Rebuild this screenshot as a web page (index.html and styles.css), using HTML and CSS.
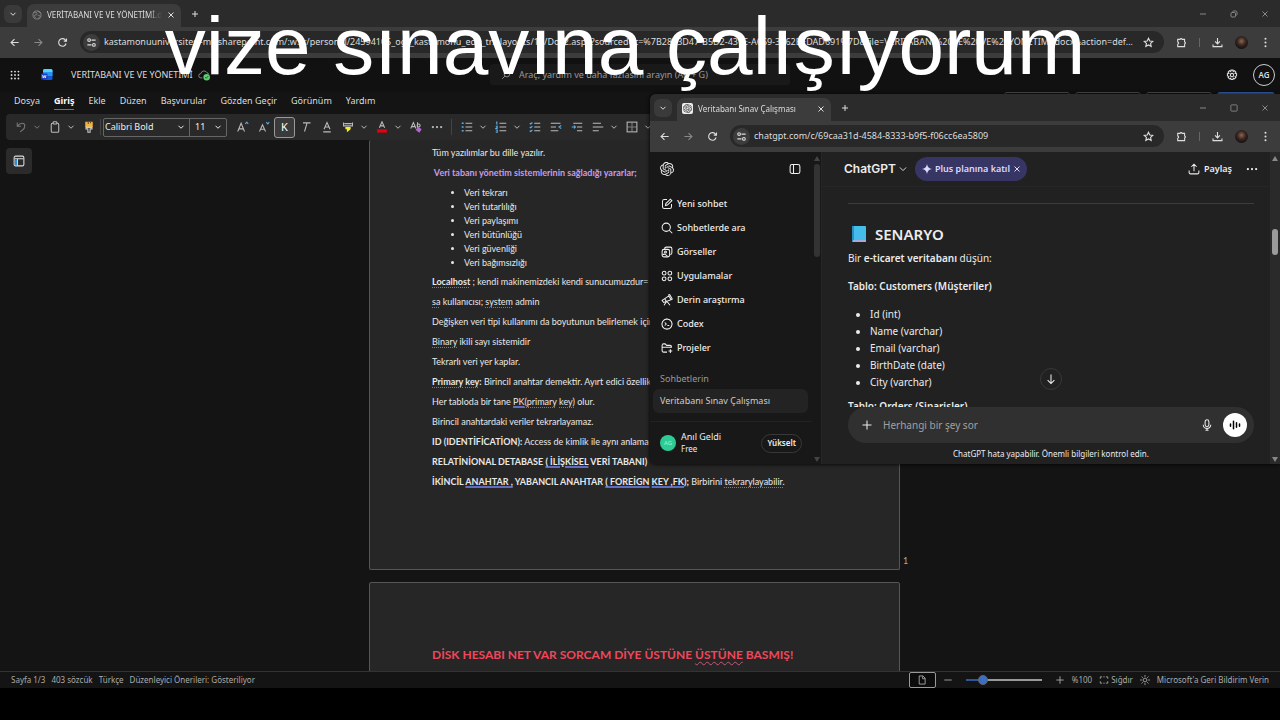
FILE: index.html
```html
<!DOCTYPE html>
<html lang="tr">
<head>
  <meta charset="utf-8">
  <title>VERİTABANI VE VE YÖNETİMİ.docx</title>
  <link rel="stylesheet" href="styles.css">
</head>
<body>
  <!-- Shared icons -->
  <svg class="defs" aria-hidden="true">
    <symbol id="chevron" viewBox="0 0 16 16"><path d="M3 5.5l5 5 5-5"/></symbol>
    <symbol id="close" viewBox="0 0 16 16"><path d="M3 3l10 10M13 3L3 13"/></symbol>
    <symbol id="plus" viewBox="0 0 16 16"><path d="M8 2v12M2 8h12"/></symbol>
    <symbol id="minus" viewBox="0 0 16 16"><path d="M2 8h12"/></symbol>
    <symbol id="back" viewBox="0 0 16 16"><path d="M14 8H3M8 3L3 8l5 5"/></symbol>
    <symbol id="forward" viewBox="0 0 16 16"><path d="M2 8h11M8 3l5 5-5 5"/></symbol>
    <symbol id="reload" viewBox="0 0 16 16"><path d="M13.2 9.5A5.5 5.5 0 1 1 12 4.2l1.6 1.6M13.8 2v4h-4"/></symbol>
    <symbol id="tune" viewBox="0 0 16 16"><circle cx="4.500" cy="4.500" r="2"/><path d="M8 4.500h6M2 11.500h6"/><circle cx="11.500" cy="11.500" r="2"/></symbol>
    <symbol id="star" viewBox="0 0 16 16"><path d="M8 1.800l1.900 4 4.300.5-3.200 3 .9 4.300L8 11.500l-3.900 2.100.9-4.300-3.200-3 4.300-.5z"/></symbol>
    <symbol id="puzzle" viewBox="0 0 16 16"><path d="M2.500 3.500h3.300a1.600 1.600 0 0 1 3.100 0h3.600v3.700a1.600 1.600 0 0 1 0 3.100v3.700h-10v-3.500a1.700 1.700 0 0 0 0-3.300z"/></symbol>
    <symbol id="download" viewBox="0 0 16 16"><path d="M8 1.500v8.500M4.500 6.500L8 10l3.500-3.500M1.500 11v3h13v-3"/></symbol>
    <symbol id="dots-v" viewBox="0 0 16 16"><g fill="currentColor" stroke="none"><circle cx="8" cy="2.500" r="1.500"/><circle cx="8" cy="8" r="1.500"/><circle cx="8" cy="13.500" r="1.500"/></g></symbol>
    <symbol id="dots-h" viewBox="0 0 16 16"><g fill="currentColor" stroke="none"><circle cx="2.500" cy="8" r="1.500"/><circle cx="8" cy="8" r="1.500"/><circle cx="13.500" cy="8" r="1.500"/></g></symbol>
    <symbol id="square" viewBox="0 0 16 16"><rect x="3" y="3" width="10" height="10" rx="1"/></symbol>
    <symbol id="restore" viewBox="0 0 16 16"><rect x="2" y="5" width="9" height="9" rx="2"/><path d="M5 3q.5-1 2-1h4q3 0 3 3v4q0 1.500-1 2"/></symbol>
    <symbol id="knot" viewBox="0 0 24 24"><path fill="currentColor" stroke="none" d="M22.2819 9.8211a5.9847 5.9847 0 0 0-.5157-4.9108 6.0462 6.0462 0 0 0-6.5098-2.9A6.0651 6.0651 0 0 0 4.9807 4.1818a5.9847 5.9847 0 0 0-3.9977 2.9 6.0462 6.0462 0 0 0 .7427 7.0966 5.98 5.98 0 0 0 .511 4.9107 6.051 6.051 0 0 0 6.5146 2.9001A5.9847 5.9847 0 0 0 13.2599 24a6.0557 6.0557 0 0 0 5.7718-4.2058 5.9894 5.9894 0 0 0 3.9977-2.9001 6.0557 6.0557 0 0 0-.7475-7.0729zm-9.022 12.6081a4.4755 4.4755 0 0 1-2.8764-1.0408l.1419-.0804 4.7783-2.7582a.7948.7948 0 0 0 .3927-.6813v-6.7369l2.02 1.1686a.071.071 0 0 1 .038.052v5.5826a4.504 4.504 0 0 1-4.4945 4.4944zm-9.6607-4.1254a4.4708 4.4708 0 0 1-.5346-3.0137l.142.0852 4.783 2.7582a.7712.7712 0 0 0 .7806 0l5.8428-3.3685v2.3324a.0804.0804 0 0 1-.0332.0615L9.74 19.9502a4.4992 4.4992 0 0 1-6.1408-1.6464zM2.3408 7.8956a4.485 4.485 0 0 1 2.3655-1.9728V11.6a.7664.7664 0 0 0 .3879.6765l5.8144 3.3543-2.0201 1.1685a.0757.0757 0 0 1-.071 0l-4.8303-2.7865A4.504 4.504 0 0 1 2.3408 7.872zm16.5963 3.8558L13.1038 8.364 15.1192 7.2a.0757.0757 0 0 1 .071 0l4.8303 2.7913a4.4944 4.4944 0 0 1-.6765 8.1042v-5.6772a.79.79 0 0 0-.407-.667zm2.0107-3.0231l-.142-.0852-4.7735-2.7818a.7759.7759 0 0 0-.7854 0L9.409 9.2297V6.8974a.0662.0662 0 0 1 .0284-.0615l4.8303-2.7866a4.4992 4.4992 0 0 1 6.6802 4.66zM8.3065 12.863l-2.02-1.1638a.0804.0804 0 0 1-.038-.0567V6.0742a4.4992 4.4992 0 0 1 7.3757-3.4537l-.142.0805L8.704 5.459a.7948.7948 0 0 0-.3927.6813zm1.0976-2.3654l2.602-1.4998 2.6069 1.4998v2.9994l-2.5974 1.4997-2.6067-1.4997Z"/></symbol>
  </svg>

  <div class="word">
    <div class="tabstrip">
      <button class="tab-search" aria-label="Sekme ara"><svg class="icon xs"><use href="#chevron"/></svg></button>
      <div class="tab">
        <svg class="icon globe" viewBox="0 0 16 16"><circle cx="8" cy="8" r="6.500"/><path d="M3 4c2 1 4-1 5 1s-1 3-3 3-1 3 1 5M10 2c0 2 2 2 4 3M9 9c2-1 4 0 4 1s-2 2-3 4"/></svg>
        <span class="tab-title">VERİTABANI VE VE YÖNETİMİ.docx</span>
        <button aria-label="Sekmeyi kapat"><svg class="icon xs"><use href="#close"/></svg></button>
      </div>
      <button class="new-tab" aria-label="Yeni sekme"><svg class="icon xs"><use href="#plus"/></svg></button>
      <div class="window-buttons">
        <button aria-label="Simge durumuna küçült"><svg class="icon xs"><use href="#minus"/></svg></button>
        <button aria-label="Önceki boyut"><svg class="icon xs"><use href="#restore"/></svg></button>
        <button aria-label="Kapat"><svg class="icon xs"><use href="#close"/></svg></button>
      </div>
    </div>
    <div class="navbar">
      <button aria-label="Geri"><svg class="icon"><use href="#back"/></svg></button>
      <button class="dim" aria-label="İleri"><svg class="icon"><use href="#forward"/></svg></button>
      <button aria-label="Yenile"><svg class="icon"><use href="#reload"/></svg></button>
      <div class="omnibox">
        <span class="site"><svg class="icon"><use href="#tune"/></svg></span>
        <input type="text" aria-label="Adres" value="kastamonuuniversitesi-my.sharepoint.com/:w:/r/personal/24594105_ogr_kastamonu_edu_tr/_layouts/15/Doc2.aspx?sourcedoc=%7B28E3D47-B5D2-431E-A659-3262BFDAD691%7D&amp;file=VERITABANI%20VE%20VE%20YÖNETIMI.docx&amp;action=default&amp;mobileredirect=true">
        <button aria-label="Yer işareti"><svg class="icon"><use href="#star"/></svg></button>
      </div>
      <div class="nav-right">
        <button aria-label="Uzantılar"><svg class="icon"><use href="#puzzle"/></svg></button>
        <span class="nav-line"></span>
        <button aria-label="İndirilenler"><svg class="icon"><use href="#download"/></svg></button>
        <button class="profile" aria-label="Profil"><span class="photo"></span></button>
        <button aria-label="Menü"><svg class="icon"><use href="#dots-v"/></svg></button>
      </div>
    </div>

    <header class="word-header">
      <button class="waffle" aria-label="Uygulama başlatıcı">
        <svg class="icon" viewBox="0 0 16 16"><g fill="#ddd" stroke="none"><circle cx="2.500" cy="2.500" r="1.500"/><circle cx="8" cy="2.500" r="1.500"/><circle cx="13.500" cy="2.500" r="1.500"/><circle cx="2.500" cy="8" r="1.500"/><circle cx="8" cy="8" r="1.500"/><circle cx="13.500" cy="8" r="1.500"/><circle cx="2.500" cy="13.500" r="1.500"/><circle cx="8" cy="13.500" r="1.500"/><circle cx="13.500" cy="13.500" r="1.500"/></g></svg>
      </button>
      <svg class="word-logo" viewBox="0 0 24 24"><rect x="4" y="1" width="19" height="22" rx="3" fill="#1458d4"/><path d="M4 8V4q0-3 3-3h13q3 0 3 3v4z" fill="#55d3ff"/><path d="M4 8h19v7H4z" fill="#2495f4"/><rect x="0" y="10" width="13" height="12" rx="2" fill="#1740c4"/><path d="M3 13l1.500 6 2-5 2 5L10 13" stroke="#fff" stroke-width="1.500" fill="none"/></svg>
      <h1 class="doc-name">VERİTABANI VE VE YÖNETİMİ</h1>
      <svg class="cloud" viewBox="0 0 18 16"><path d="M6 12H4a3 3 0 0 1 0-6 4.500 4.500 0 0 1 8.500-1A3 3 0 0 1 15 7" fill="none" stroke="#aaa"/><circle cx="12" cy="11" r="4.500" fill="#5bd06f"/><path d="M10 11l1.500 1.500L14.200 9.500" fill="none" stroke="#222"/></svg>
      <label class="search">
        <svg class="icon" viewBox="0 0 16 16"><circle cx="9.500" cy="6.500" r="4.500"/><path d="M6.300 9.700L2 14"/></svg>
        <input type="search" aria-label="Ara" placeholder="Araç, yardım ve daha fazlasını arayın (Alt + G)">
      </label>
      <button class="gear" aria-label="Ayarlar"><svg class="icon md" viewBox="0 0 16 16"><path d="M6.700 1.500h2.600l.4 1.900 1.600-1.100 1.900 1.900-1.100 1.600 2 .5v2.900l-2 .5 1.100 1.600-1.900 1.900-1.600-1.100-.4 2H6.700l-.4-2-1.600 1.100-1.900-1.900 1.100-1.600-2-.5V6.300l2-.5-1.100-1.600 1.900-1.900 1.600 1.100z"/><circle cx="8" cy="8" r="2.200"/></svg></button>
      <button class="account">AG</button>
    </header>

    <nav class="menu">
      <a href="#">Dosya</a>
      <a href="#" class="active">Giriş</a>
      <a href="#">Ekle</a>
      <a href="#">Düzen</a>
      <a href="#">Başvurular</a>
      <a href="#">Gözden Geçir</a>
      <a href="#">Görünüm</a>
      <a href="#">Yardım</a>
      <div class="menu-actions">
        <button aria-label="Açıklamalar"></button>
        <button aria-label="Yakala"></button>
        <button aria-label="Düzenleme"></button>
        <button class="share-blue" aria-label="Paylaş"></button>
      </div>
    </nav>

    <div class="ribbon">
      <button class="tool off" aria-label="Geri al"><svg class="icon md" viewBox="0 0 16 16"><path d="M3 2v5h5M3 7q3-4 6.500-4T13 6.500 10 12l-3 2.500"/></svg></button>
      <button class="chev off" aria-label="Geri alma seçenekleri"><svg class="icon xs"><use href="#chevron"/></svg></button>
      <button class="tool" aria-label="Yapıştır"><svg class="icon md" viewBox="0 0 16 16"><rect x="3" y="3" width="10" height="12" rx="1.500"/><rect x="5.500" y="1" width="5" height="3" rx="1" fill="#292929"/></svg></button>
      <button class="chev" aria-label="Yapıştırma seçenekleri"><svg class="icon xs"><use href="#chevron"/></svg></button>
      <button class="tool" aria-label="Biçim boyacısı"><svg class="icon md" viewBox="0 0 16 16"><path d="M3 1h10v7H3z" fill="#f2b441" stroke="none"/><path d="M7 1v3M10 1v2" stroke="#6b4b12"/><path d="M4 8.500h8v2H9.500V15h-3v-4.500H4z" stroke="#ccc"/></svg></button>
      <span class="split"></span>
      <div class="combo">
        <label class="combo-font"><select aria-label="Yazı tipi"><option>Calibri Bold</option></select><svg class="icon xs"><use href="#chevron"/></svg></label>
        <label class="combo-size"><select aria-label="Yazı tipi boyutu"><option>11</option></select><svg class="icon xs"><use href="#chevron"/></svg></label>
      </div>
      <div class="group">
        <button class="tool" aria-label="Yazı tipini büyüt"><svg class="icon md" viewBox="0 0 16 16"><path d="M1 14L5.500 3 10 14M2.500 10.500h6"/><path d="M11 4l2-2.500L15 4" stroke="#5fb0e8"/></svg></button>
        <button class="tool" aria-label="Yazı tipini küçült"><svg class="icon md" viewBox="0 0 16 16"><path d="M2 14l4-9 4 9M3.500 11h5"/><path d="M11 1.500L13 4l2-2.500" stroke="#5fb0e8"/></svg></button>
        <button class="tool pressed" aria-label="Kalın">K</button>
        <button class="tool" aria-label="İtalik"><svg class="icon md" viewBox="0 0 16 16"><path d="M4 2.500h10M9.500 2.500L6 14"/></svg></button>
        <button class="tool" aria-label="Altı çizili"><svg class="icon md" viewBox="0 0 16 16"><path d="M4 11l4-9 4 9M5.500 8h5M3 14.500h10"/></svg></button>
        <button class="tool" aria-label="Vurgu rengi"><svg class="icon md" viewBox="0 0 16 16"><path d="M2 2v4.500h12V2M3 3.500h10"/><path d="M4.500 8h7v3l-5 4V11H4.500z" fill="#f4f02c" stroke="none"/></svg></button>
        <button class="chev" aria-label="Vurgu seçenekleri"><svg class="icon xs"><use href="#chevron"/></svg></button>
        <button class="tool" aria-label="Yazı rengi"><svg class="icon md" viewBox="0 0 16 16"><path d="M4.500 9L8 1l3.500 8M5.500 6.500h5"/><path d="M1.500 11h13v4.500h-13z" fill="#e3000f" stroke="none"/></svg></button>
        <button class="chev" aria-label="Renk seçenekleri"><svg class="icon xs"><use href="#chevron"/></svg></button>
        <button class="tool" aria-label="Biçimlendirmeyi temizle"><svg class="icon md" viewBox="0 0 16 16"><path d="M1 10l3.500-8L8 10M2.200 7.500h4.500M10 1.500V9"/><circle cx="11.500" cy="6" r="2"/><path d="M11 7.500l4.500 3.500-3 4.500-5-3.500z" fill="#b565cf" stroke="none"/></svg></button>
        <button class="tool" aria-label="Diğer"><svg class="icon md"><use href="#dots-h"/></svg></button>
      </div>
      <span class="split"></span>
      <div class="group">
        <button class="tool" aria-label="Madde işaretleri"><svg class="icon md" viewBox="0 0 16 16"><path d="M6 3h9M6 8h9M6 13h9"/><path d="M1 3h2.500M1 8h2.500M1 13h2.500" stroke="#5fb0e8" stroke-width="2.200"/></svg></button>
        <button class="chev" aria-label="Madde seçenekleri"><svg class="icon xs"><use href="#chevron"/></svg></button>
        <button class="tool" aria-label="Numaralandırma"><svg class="icon md" viewBox="0 0 16 16"><path d="M6 3h9M6 8h9M6 13h9"/><path d="M1.500 1.500h1V5M1 7h2v1.500L1 10h2.500M1 12h2v3H1" stroke="#5fb0e8"/></svg></button>
        <button class="chev" aria-label="Numara seçenekleri"><svg class="icon xs"><use href="#chevron"/></svg></button>
        <button class="tool" aria-label="Denetim listesi"><svg class="icon md" viewBox="0 0 16 16"><path d="M7 3h8M7 8h8M7 13h8"/><path d="M1 3l1.200 1L4.500 2M1 8l1.200 1L4.500 7M1 13l1.200 1 2.300-2" stroke="#5fb0e8"/></svg></button>
        <button class="tool" aria-label="Girintiyi azalt"><svg class="icon md" viewBox="0 0 16 16"><path d="M1 3h13M1 8h7M1 13h10"/><path d="M15 6l-3 2 3 2" stroke="#5fb0e8"/></svg></button>
        <button class="tool" aria-label="Girintiyi artır"><svg class="icon md" viewBox="0 0 16 16"><path d="M3 3h12M8 8h7M8 13h7"/><path d="M1 8h5M4 6l2 2-2 2" stroke="#5fb0e8"/></svg></button>
        <button class="tool" aria-label="Hizalama"><svg class="icon md" viewBox="0 0 16 16"><path d="M1 3h11M1 8h14M1 13h8"/></svg></button>
        <button class="chev" aria-label="Hizalama seçenekleri"><svg class="icon xs"><use href="#chevron"/></svg></button>
        <button class="tool" aria-label="Kenarlıklar"><svg class="icon md" viewBox="0 0 16 16"><rect x="1.500" y="1.500" width="13" height="13"/><path d="M8 2v12M2 8h12" opacity=".6"/></svg></button>
        <button class="chev" aria-label="Kenarlık seçenekleri"><svg class="icon xs"><use href="#chevron"/></svg></button>
      </div>
    </div>

    <main class="workspace">
      <button class="pane-toggle" aria-label="Gezinti bölmesi"><svg class="icon md" viewBox="0 0 16 16"><rect x="1.500" y="1.500" width="13" height="13" rx="2"/><path d="M6 5v9M2 5h12"/><path d="M2.500 6h3v7.500h-3z" fill="#2b8fd9" stroke="none"/></svg></button>
      <article class="page first">
        <p>Tüm yazılımlar bu dille yazılır.</p>
        <p class="lilac">&nbsp;Veri tabanı yönetim sistemlerinin sağladığı yararlar;</p>
        <ul>
          <li>Veri tekrarı</li>
          <li>Veri tutarlılığı</li>
          <li>Veri paylaşımı</li>
          <li>Veri bütünlüğü</li>
          <li>Veri güvenliği</li>
          <li>Veri bağımsızlığı</li>
        </ul>
        <p><b><span class="spell">Localhost</span></b> ; kendi makinemizdeki kendi sunucumuzdur=</p>
        <p><span class="spell">sa</span> kullanıcısı; <span class="spell">system</span> admin</p>
        <p>Değişken veri tipi kullanımı da boyutunun belirlemek için</p>
        <p><span class="spell">Binary</span> ikili sayı sistemidir</p>
        <p>Tekrarlı veri yer kaplar.</p>
        <p><b><span class="spell">Primary</span> <span class="spell">key</span>:</b> Birincil anahtar demektir. Ayırt edici özellik</p>
        <p>Her tabloda bir tane <span class="gram">PK</span><span class="spell">(primary</span> <span class="spell">key)</span> olur.</p>
        <p>Birincil anahtardaki veriler tekrarlayamaz.</p>
        <p><b>ID (IDENTİFİCATİON):</b> Access de kimlik ile aynı anlama</p>
        <p><b>RELATİNİONAL DETABASE <span class="gram">( İLİŞKİSEL</span> VERİ TABANI)</b></p>
        <p><b>İKİNCİL <span class="gram">ANAHTAR ,</span> YABANCIL ANAHTAR <span class="gram">( FOREİGN</span> <span class="gram">KEY ,FK</span>);</b> Birbirini <span class="spell">tekrarylayabilir.</span></p>
        <span class="page-number">1</span>
      </article>
      <article class="page second">
        <h2>DİSK HESABI NET VAR SORCAM DİYE ÜSTÜNE <span class="spell">ÜSTÜNE</span> BASMIŞ!</h2>
      </article>
    </main>

    <footer class="status">
      <span>Sayfa 1/3</span>
      <span>403 sözcük</span>
      <span>Türkçe</span>
      <span>Düzenleyici Önerileri: Gösteriliyor</span>
      <div class="status-right">
        <button class="view" aria-label="Sayfa görünümü"><svg class="icon" viewBox="0 0 16 16"><path d="M3.500 1.500h6L13 5v9.500H3.500zM9 2v4h4"/></svg></button>
        <button aria-label="Uzaklaştır"><svg class="icon"><use href="#minus"/></svg></button>
        <input type="range" aria-label="Yakınlaştırma" min="0" max="100" value="18">
        <button aria-label="Yakınlaştır"><svg class="icon"><use href="#plus"/></svg></button>
        <span>%100</span>
        <button class="fit"><svg class="icon" viewBox="0 0 16 16"><path d="M2 6V3h3M11 3h3v3M14 10v3h-3M5 13H2v-3M7 3h2M7 13h2"/></svg>Sığdır</button>
        <button aria-label="Parlaklık"><svg class="icon" viewBox="0 0 16 16"><circle cx="8" cy="8" r="3"/><path d="M8 0v3M8 13v3M0 8h3M13 8h3M2.500 2.500l2 2M11.500 11.500l2 2M2.500 13.500l2-2M11.500 4.500l2-2"/></svg></button>
        <a href="#">Microsoft'a Geri Bildirim Verin</a>
      </div>
    </footer>
  </div>

  <section class="chat-window">
    <div class="tabstrip">
      <button class="tab-search" aria-label="Sekme ara"><svg class="icon xs"><use href="#chevron"/></svg></button>
      <div class="tab">
        <span class="favicon"><svg class="icon"><use href="#knot"/></svg></span>
        <span class="tab-title">Veritabanı Sınav Çalışması</span>
        <button aria-label="Sekmeyi kapat"><svg class="icon xs"><use href="#close"/></svg></button>
      </div>
      <button class="new-tab" aria-label="Yeni sekme"><svg class="icon xs"><use href="#plus"/></svg></button>
      <div class="window-buttons">
        <button aria-label="Simge durumuna küçült"><svg class="icon xs"><use href="#minus"/></svg></button>
        <button aria-label="Ekranı kapla"><svg class="icon"><use href="#square"/></svg></button>
        <button aria-label="Kapat"><svg class="icon xs"><use href="#close"/></svg></button>
      </div>
    </div>
    <div class="navbar">
      <button aria-label="Geri"><svg class="icon"><use href="#back"/></svg></button>
      <button class="dim" aria-label="İleri"><svg class="icon"><use href="#forward"/></svg></button>
      <button aria-label="Yenile"><svg class="icon"><use href="#reload"/></svg></button>
      <div class="omnibox">
        <span class="site"><svg class="icon"><use href="#tune"/></svg></span>
        <input type="text" aria-label="Adres" value="chatgpt.com/c/69caa31d-4584-8333-b9f5-f06cc6ea5809">
        <button aria-label="Yer işareti"><svg class="icon"><use href="#star"/></svg></button>
      </div>
      <div class="nav-right">
        <button aria-label="Uzantılar"><svg class="icon"><use href="#puzzle"/></svg></button>
        <span class="nav-line"></span>
        <button aria-label="İndirilenler"><svg class="icon"><use href="#download"/></svg></button>
        <button class="profile" aria-label="Profil"><span class="photo"></span></button>
        <button aria-label="Menü"><svg class="icon"><use href="#dots-v"/></svg></button>
      </div>
    </div>

    <div class="chat-body">
      <aside class="sidebar">
        <div class="sidebar-main">
          <div class="sidebar-top">
            <svg class="icon logo"><use href="#knot"/></svg>
            <button aria-label="Kenar çubuğunu kapat"><svg class="icon md" viewBox="0 0 16 16"><rect x="1.500" y="2" width="13" height="12" rx="2.500"/><path d="M6 2v12"/></svg></button>
          </div>
          <nav class="side-nav">
            <a href="#"><svg class="icon md" viewBox="0 0 16 16"><path d="M8 2H4.500Q2 2 2 4.500v7Q2 14 4.500 14h7q2.500 0 2.500-2.500V8M6 10l.5-2.500 6-6 2 2-6 6z"/></svg>Yeni sohbet</a>
            <a href="#"><svg class="icon md" viewBox="0 0 16 16"><circle cx="7" cy="7" r="5.500"/><path d="M11 11l4 4"/></svg>Sohbetlerde ara</a>
            <a href="#"><svg class="icon md" viewBox="0 0 16 16"><path d="M5 4V3q0-1.500 2-1.500h5.500q2 0 2 2V9q0 2-2 2.500"/><rect x="1.500" y="4.500" width="10" height="10" rx="2.500"/><circle cx="6" cy="8" r="1.300"/><path d="M2 12q2-2 4-.5t3 2.500"/></svg>Görseller</a>
            <a href="#"><svg class="icon md" viewBox="0 0 16 16"><circle cx="4.200" cy="4.200" r="2.500"/><circle cx="11.800" cy="4.200" r="2.500"/><circle cx="4.200" cy="11.800" r="2.500"/><circle cx="11.800" cy="11.800" r="2.500"/></svg>Uygulamalar</a>
            <a href="#"><svg class="icon md" viewBox="0 0 16 16"><path d="M1.500 8.500l9-6 3 5-10 3.800zM9.500 1.500l2-.8 3.500 6-2 1M8 10l4 5M7.500 10L4 15M5 6l2 4"/></svg>Derin araştırma</a>
            <a href="#"><svg class="icon md" viewBox="0 0 16 16"><path d="M8 1.200l3.500 1.200L14 5l.8 3-1 3.500L11.500 14 8 14.800 4.500 14 2 11.500 1.200 8 2 5l2.500-2.600z"/><path d="M5 6l2 2-2 2M8.500 10H11"/></svg>Codex</a>
            <a href="#"><svg class="icon md" viewBox="0 0 16 16"><path d="M8 13.500H3.500q-2 0-2-2v-7q0-2 2-2h2L7.500 4.500H12q2 0 2 2M1.500 7h13M12.500 9.500v5M10 12h5"/></svg>Projeler</a>
          </nav>
          <h3>Sohbetlerin</h3>
          <a href="#" class="chat-link">Veritabanı Sınav Çalışması</a>
          <div class="user">
            <span class="avatar">AG</span>
            <div class="user-name">Anıl Geldi<small>Free</small></div>
            <button class="upgrade">Yükselt</button>
          </div>
        </div>
        <div class="bar left-bar"><i class="up"></i><i class="thumb"></i><i class="down"></i></div>
      </aside>

      <div class="chat">
        <div class="chat-main">
          <header class="chat-header">
            <button class="model">ChatGPT <svg class="icon"><use href="#chevron"/></svg></button>
            <div class="plus-pill">
              <svg class="icon" viewBox="0 0 16 16"><path d="M8 0q1 7 8 8-7 1-8 8-1-7-8-8 7-1 8-8z" fill="currentColor" stroke="none"/></svg>
              <a href="#">Plus planına katıl</a>
              <button aria-label="Gizle"><svg class="icon xs"><use href="#close"/></svg></button>
            </div>
            <button class="share"><svg class="icon md" viewBox="0 0 16 16"><path d="M8 11V2M4.500 5L8 1.500 11.500 5M1.500 10v2.500q0 2 2 2h9q2 0 2-2V10"/></svg>Paylaş</button>
            <button aria-label="Diğer"><svg class="icon md"><use href="#dots-h"/></svg></button>
          </header>
          <div class="messages">
            <hr>
            <h2><svg class="book" viewBox="0 0 16 18"><rect x="1" y="1" width="14" height="16" rx="1" fill="#45bdeb"/><path d="M1 1h2v15H1z" fill="#278fc4"/><path d="M2 15h13v2H2z" fill="#a9a6d8"/></svg>SENARYO</h2>
            <p>Bir <b>e-ticaret veritabanı</b> düşün:</p>
            <p class="table-name"><b>Tablo: Customers (Müşteriler)</b></p>
            <ul>
              <li>Id (int)</li>
              <li>Name (varchar)</li>
              <li>Email (varchar)</li>
              <li>BirthDate (date)</li>
              <li>City (varchar)</li>
            </ul>
            <p class="table-name"><b>Tablo: Orders (Siparişler)</b></p>
            <button class="scroll-down" aria-label="En alta in"><svg class="icon md" viewBox="0 0 16 16"><path d="M8 2v12M3.500 9.500L8 14l4.500-4.500"/></svg></button>
          </div>
          <form class="composer">
            <button type="button" aria-label="Ekle"><svg class="icon md"><use href="#plus"/></svg></button>
            <input type="text" aria-label="Mesaj" placeholder="Herhangi bir şey sor">
            <button type="button" aria-label="Dikte"><svg class="icon md" viewBox="0 0 16 16"><rect x="5.500" y="1" width="5" height="9" rx="2.500"/><path d="M3 7.500a5 5 0 0 0 10 0M8 12.500V15M6 15h4"/></svg></button>
            <button type="button" class="voice" aria-label="Sesli mod"><svg class="icon md" viewBox="0 0 16 16"><path d="M2 6.500v3M6 3v10M10 5v6M14 6.500v3" stroke-width="2" stroke-linecap="round"/></svg></button>
          </form>
          <p class="note">ChatGPT hata yapabilir. Önemli bilgileri kontrol edin.</p>
        </div>
        <div class="bar right-bar"><i class="up"></i><i class="thumb"></i><i class="down"></i></div>
      </div>
    </div>
  </section>

  <div class="caption">vize sınavına çalışıyorum</div>
</body>
</html>
```
FILE: styles.css
```css
* {
  box-sizing: border-box;
}

body {
  margin: 0;
  height: 100vh;
  padding-bottom: 32px;
  position: relative;
  overflow: hidden;
  background: #000;
  color: #ddd;
  font: 9px/14px "Noto Sans", sans-serif;
}

button,
input,
select {
  font: inherit;
  color: inherit;
  background: none;
  border: 0;
  padding: 0;
  margin: 0;
  outline: 0;
}

button {
  display: flex;
  align-items: center;
  justify-content: center;
  flex-shrink: 0;
}

a {
  color: inherit;
  text-decoration: none;
}

h1, h2, h3, p, ul {
  margin: 0;
  padding: 0;
}

.defs {
  display: none;
}

.icon {
  width: 10px;
  height: 10px;
  fill: none;
  stroke: currentColor;
  stroke-width: 1.4;
  flex-shrink: 0;
}

.icon.xs {
  width: 8px;
  height: 8px;
  stroke-width: 2;
}

.icon.md {
  width: 12px;
  height: 12px;
}

/* Browser frame */
.word {
  height: 100%;
  display: flex;
  flex-direction: column;
  background: #141414;
}

.tabstrip {
  display: flex;
  align-items: center;
  height: 27px;
  padding-left: 4px;
  background: #2b2b2b;
  flex-shrink: 0;
}

.tab-search {
  width: 18px;
  height: 18px;
  border-radius: 6px;
  background: #3a3a3a;
}

.tab {
  display: flex;
  align-items: center;
  align-self: flex-end;
  gap: 5px;
  width: 154px;
  height: 23px;
  margin-left: 5px;
  padding: 0 6px 2px 5px;
  border-radius: 7px 7px 0 0;
  background: #3c3c3c;
}

.tab-title {
  flex: 1;
  overflow: hidden;
  white-space: nowrap;
  font-size: 8px;
  -webkit-mask-image: linear-gradient(to right, #000 88%, transparent);
}

.globe {
  color: #888;
}

.favicon {
  display: flex;
  padding: 1px;
  border-radius: 2px;
  background: #eee;
  color: #333;
}

.favicon .icon {
  width: 9px;
  height: 9px;
}

.new-tab {
  width: 27px;
  height: 20px;
}

.window-buttons {
  display: flex;
  margin-left: auto;
  color: #888;
}

.window-buttons button {
  width: 31px;
  height: 27px;
}

.navbar {
  display: flex;
  align-items: center;
  height: 31px;
  padding: 0 0 1px 2px;
  background: #3c3c3c;
  flex-shrink: 0;
}

.navbar .icon {
  width: 11px;
  height: 11px;
  stroke-width: 1.6;
}

.navbar > button {
  width: 24px;
  height: 24px;
}

.dim {
  color: #888;
}

.omnibox {
  flex: 1;
  display: flex;
  align-items: center;
  min-width: 0;
  height: 22px;
  margin-left: 6px;
  padding: 0 10px 0 3px;
  border-radius: 11px;
  background: #282828;
}

.omnibox input {
  flex: 1;
  min-width: 0;
  margin: 0 10px 0 4px;
  text-overflow: ellipsis;
}

.site {
  display: flex;
  padding: 3px;
  border-radius: 50%;
  background: #3c3c3c;
}

.nav-right {
  display: flex;
  align-items: center;
  padding: 0 3px 0 5px;
}

.nav-right button {
  width: 24px;
  height: 24px;
}

.nav-line {
  width: 1px;
  height: 9px;
  margin: 0 5px 0 6px;
  background: #666;
}

.photo {
  width: 13px;
  height: 13px;
  border-radius: 50%;
  background: radial-gradient(circle at 50% 40%, #8b6651, #3a2620 40%, #14100f 75%);
}

/* Word header and menu */
.word-header {
  display: flex;
  align-items: center;
  position: relative;
  height: 34px;
  padding: 0 5px 1px 10px;
  background: #111;
  flex-shrink: 0;
}

.word-logo {
  width: 12px;
  height: 13px;
  margin: 0 18px 0 21px;
}

.doc-name {
  font-size: 9px;
  font-weight: 400;
}

.cloud {
  width: 13px;
  height: 12px;
  margin-left: 5px;
}

.search {
  position: absolute;
  left: 50%;
  display: flex;
  align-items: center;
  gap: 8px;
  width: 300px;
  height: 21px;
  margin-left: -150px;
  padding: 0 11px;
  border-radius: 3px;
  background: #191919;
  color: #999;
}

.search input {
  flex: 1;
}

.search input::placeholder {
  color: #999;
}

.gear {
  margin-left: auto;
}

.account {
  width: 22px;
  height: 22px;
  margin-left: 15px;
  border: 1px solid #ccc;
  border-radius: 50%;
  font-size: 8px;
  font-weight: 600;
}

.menu {
  display: flex;
  gap: 14px;
  height: 22px;
  padding: 2px 5px 0 14px;
  flex-shrink: 0;
}

.menu .active {
  color: #fff;
  font-weight: 700;
  height: 16px;
  border-bottom: 1px solid #3f7ad8;
}

.menu-actions {
  display: flex;
  gap: 5px;
  margin: -2px 0 0 auto;
}

.menu-actions button {
  width: 66px;
  height: 20px;
  border: 1px solid #555;
  border-radius: 3px;
}

.menu-actions .share-blue {
  width: 58px;
  border-color: #3567c0;
  background: #3567c0;
}

.ribbon {
  display: flex;
  align-items: center;
  height: 26px;
  margin-left: 6px;
  padding-left: 4px;
  border-radius: 4px 0 0 4px;
  background: #292929;
  color: #bbb;
  flex-shrink: 0;
}

.group {
  display: flex;
  align-items: center;
}

.tool {
  width: 21px;
  height: 21px;
}

.chev {
  width: 12px;
  height: 21px;
  margin-right: 1px;
}

.off {
  color: #777;
}

.pressed {
  border: 1px solid #999;
  border-radius: 3px;
  background: #3a3a3a;
  color: #fff;
  font-size: 11px;
}

.split {
  width: 1px;
  height: 16px;
  margin: 0 2px 0 1px;
  background: #444;
}

.group + .split {
  margin: 0 4px;
}

.combo {
  display: flex;
  height: 19px;
  margin-right: 5px;
  border: 1px solid #666;
  border-radius: 2px;
  color: #eee;
}

.combo label {
  display: grid;
  align-items: center;
}

.combo-font {
  width: 85px;
}

.combo-size {
  width: 37px;
  border-left: 1px solid #666;
}

.combo select,
.combo svg {
  grid-area: 1 / 1;
}

.combo select {
  appearance: none;
  width: 100%;
  padding-left: 1px;
}

.combo-size select {
  padding-left: 5px;
}

.combo svg {
  justify-self: end;
  margin-right: 4px;
  pointer-events: none;
}

/* Document */
.workspace {
  flex: 1;
  min-height: 0;
  position: relative;
  overflow: hidden;
  padding-right: 11px;
}

.pane-toggle {
  position: absolute;
  left: 6px;
  top: 8px;
  width: 26px;
  height: 26px;
  border-radius: 4px;
  background: #2b2b2b;
}

.page {
  position: relative;
  width: 531px;
  margin: 0 auto 12px;
  padding: 0 0 74px 62px;
  border: 1px solid #555;
  border-radius: 2px;
  background: #262626;
  color: #e8e8e8;
  font: 9px/14px Lato, sans-serif;
  white-space: nowrap;
}

.first {
  border-top: 0;
  padding-top: 6px;
}

.page p {
  margin-bottom: 6px;
}

.page ul {
  margin-bottom: 5px;
  padding-left: 32px;
}

.lilac {
  color: #c79be8;
  font-weight: 700;
}

.spell {
  text-decoration: underline dotted #c4587a 1px;
  text-underline-offset: 2px;
}

.gram {
  text-decoration: underline #5f6cc0 2px;
  text-underline-offset: 1px;
}

.page-number {
  position: absolute;
  left: 100%;
  bottom: 1px;
  padding-left: 4px;
  color: #aaa;
}

.second {
  padding-top: 62px;
}

.second h2 {
  color: #f0475b;
  font-size: 12px;
  line-height: 20px;
}

.second .spell {
  text-decoration-style: wavy;
}

.status {
  display: flex;
  align-items: center;
  gap: 6px;
  height: 17px;
  padding: 0 11px;
  border-top: 1px solid #333;
  color: #aaa;
  font-size: 8px;
  flex-shrink: 0;
}

.status-right {
  display: flex;
  align-items: center;
  gap: 7px;
  margin-left: auto;
}

.status-right input {
  appearance: none;
  width: 76px;
  height: 2px;
  margin: 0 6px;
  background: linear-gradient(to right, #2f5597 20%, #999 20%);
}

.status-right input::-webkit-slider-thumb {
  appearance: none;
  width: 10px;
  height: 10px;
  border: 1px solid #666;
  border-radius: 50%;
  background: #3a6fc4;
}

.view {
  width: 27px;
  height: 16px;
  border: 1px solid #999;
  border-radius: 2px;
  background: #0c0c0c;
}

.fit {
  gap: 2px;
}

/* Chat window */
.chat-window {
  position: absolute;
  top: 94px;
  right: 0;
  width: 630px;
  height: 370px;
  display: flex;
  flex-direction: column;
  overflow: hidden;
  border-radius: 6px 0 0 6px;
  background: #212121;
  box-shadow: 0 0 4px #000;
}

.chat-body {
  flex: 1;
  min-height: 0;
  display: flex;
}

.sidebar {
  display: flex;
  width: 172px;
  background: #181818;
  color: #eee;
}

.sidebar-main {
  flex: 1;
  display: flex;
  flex-direction: column;
}

.sidebar-top {
  display: flex;
  align-items: center;
  justify-content: space-between;
  padding: 10px 11px 16px 10px;
}

.icon.logo {
  width: 14px;
  height: 14px;
}

.side-nav a {
  display: flex;
  align-items: center;
  gap: 4px;
  height: 24px;
  padding-left: 11px;
  font-weight: 500;
}

.sidebar h3 {
  margin-top: 12px;
  padding-left: 10px;
  color: #999;
  font-size: 9px;
  font-weight: 400;
}

.chat-link {
  margin: 3px 4px 0 3px;
  padding: 5px 7px;
  border-radius: 6px;
  background: #232323;
  color: #ccc;
}

.user {
  display: flex;
  align-items: center;
  gap: 5px;
  margin-top: auto;
  padding: 9px 10px;
  border-top: 1px solid #222;
}

.avatar {
  width: 16px;
  border-radius: 50%;
  background: #2ecc94;
  color: #a8ecd2;
  font-size: 6px;
  line-height: 16px;
  text-align: center;
}

.user-name {
  flex: 1;
  line-height: 12px;
}

.user-name small {
  display: block;
  font-size: 8px;
}

.upgrade {
  height: 19px;
  padding: 0 5px;
  border: 1px solid #383838;
  border-radius: 10px;
  font-size: 8px;
  font-weight: 600;
}

/* Scrollbars */
.bar {
  display: flex;
  flex-direction: column;
  align-items: center;
  width: 10px;
  padding: 4px 0 2px;
}

.bar i {
  display: block;
}

.up,
.down {
  border: 3px solid transparent;
}

.up {
  border-top: 0;
  border-bottom: 5px solid #888;
}

.down {
  border-bottom: 0;
  border-top: 5px solid #888;
  margin-top: auto;
}

.thumb {
  width: 6px;
  border-radius: 3px;
}

.left-bar {
  border-right: 1px solid #262626;
}

.left-bar .up,
.left-bar .down {
  opacity: 0.4;
}

.left-bar .thumb {
  height: 93px;
  margin-top: 3px;
  background: #333;
}

.right-bar {
  background: #2a2a2a;
}

.right-bar .thumb {
  height: 26px;
  margin-top: 68px;
  background: #9b9b9b;
}

.chat {
  flex: 1;
  display: flex;
  color: #ececec;
}

.chat-main {
  flex: 1;
  display: flex;
  flex-direction: column;
}

.chat-header {
  display: flex;
  align-items: center;
  height: 35px;
  padding: 0 12px 0 22px;
  border-bottom: 1px solid #262626;
}

.model {
  gap: 2px;
  font: 600 12px/18px Inter, sans-serif;
}

.plus-pill {
  display: flex;
  align-items: center;
  gap: 3px;
  height: 24px;
  margin-left: 7px;
  padding: 0 6px 0 7px;
  border-radius: 12px;
  background: #373563;
  color: #dcdaff;
  font-weight: 600;
}

.share {
  gap: 4px;
  margin: 0 14px 0 auto;
  font-weight: 600;
}

.messages {
  flex: 1;
  min-height: 0;
  position: relative;
  overflow: hidden;
  padding: 16px 16px 0 26px;
  font-size: 10px;
  line-height: 18px;
}

.messages hr {
  margin: 0 0 18px;
  border: 0;
  border-top: 1px solid #3c3c3c;
}

.messages h2 {
  display: flex;
  align-items: center;
  gap: 8px;
  padding-left: 3px;
  font-size: 15px;
  font-weight: 600;
  line-height: 24px;
}

.messages b {
  font-weight: 600;
}

.messages > p {
  margin-top: 3px;
}

.messages .table-name {
  margin-top: 10px;
}

.book {
  width: 16px;
  height: 18px;
}

.messages ul {
  margin: 11px 0 -4px;
  padding-left: 22px;
  line-height: 17px;
}

.scroll-down {
  position: absolute;
  left: 50%;
  bottom: 17px;
  width: 22px;
  height: 22px;
  margin-left: -6px;
  border: 1px solid #383838;
  border-radius: 50%;
  background: #212121;
}

.composer {
  display: flex;
  align-items: center;
  height: 36px;
  margin: 0 16px 0 26px;
  padding: 0 7px 0 13px;
  border-radius: 18px;
  background: #303030;
  font-size: 10px;
}

.composer input {
  flex: 1;
  margin-left: 10px;
}

.composer input::placeholder {
  color: #a0a0a0;
}

.voice {
  width: 24px;
  height: 24px;
  margin-left: 10px;
  border-radius: 50%;
  background: #fff;
  color: #000;
}

.note {
  padding: 4px 0 3px 10px;
  font-size: 8px;
  text-align: center;
}

/* Video caption */
.caption {
  position: absolute;
  top: 1px;
  left: 0;
  right: 30px;
  color: #fff;
  font: 82px/90px "Liberation Sans", sans-serif;
  text-align: center;
  white-space: nowrap;
  pointer-events: none;
}
```
